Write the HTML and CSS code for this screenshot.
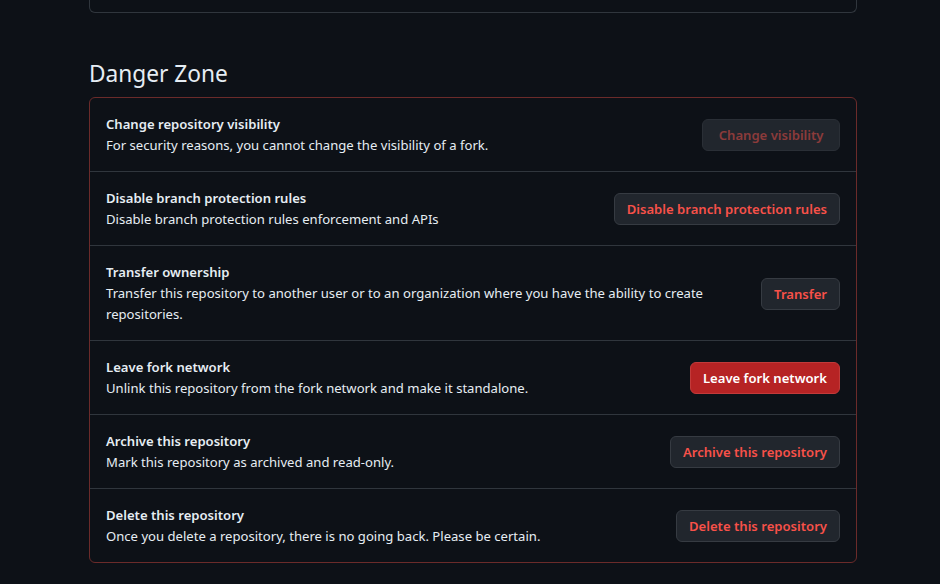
FILE: index.html
```html
<!DOCTYPE html>
<html lang="en">
<head>
<meta charset="utf-8">
<title>Danger Zone</title>
<link rel="stylesheet" href="styles.css">
</head>
<body>
<div class="page">
  <div class="prev-box"></div>
  <h2 class="subhead">Danger Zone</h2>
  <div class="danger-box">
    <div class="row">
      <div class="info">
        <div class="title">Change repository visibility</div>
        <div class="desc">For security reasons, you cannot change the visibility of a fork.</div>
      </div>
      <button class="btn btn-disabled" type="button">Change visibility</button>
    </div>
    <div class="row">
      <div class="info">
        <div class="title">Disable branch protection rules</div>
        <div class="desc">Disable branch protection rules enforcement and APIs</div>
      </div>
      <button class="btn" type="button">Disable branch protection rules</button>
    </div>
    <div class="row">
      <div class="info">
        <div class="title">Transfer ownership</div>
        <div class="desc">Transfer this repository to another user or to an organization where you have the ability to create repositories.</div>
      </div>
      <button class="btn" type="button">Transfer</button>
    </div>
    <div class="row">
      <div class="info">
        <div class="title">Leave fork network</div>
        <div class="desc">Unlink this repository from the fork network and make it standalone.</div>
      </div>
      <button class="btn btn-danger" type="button">Leave fork network</button>
    </div>
    <div class="row">
      <div class="info">
        <div class="title">Archive this repository</div>
        <div class="desc">Mark this repository as archived and read-only.</div>
      </div>
      <button class="btn" type="button">Archive this repository</button>
    </div>
    <div class="row">
      <div class="info">
        <div class="title">Delete this repository</div>
        <div class="desc">Once you delete a repository, there is no going back. Please be certain.</div>
      </div>
      <button class="btn" type="button">Delete this repository</button>
    </div>
  </div>
</div>
</body>
</html>
```
FILE: styles.css
```css
* { box-sizing: border-box; }
html, body {
  margin: 0;
  padding: 0;
  background: #0d1117;
}
body {
  font-family: "Noto Sans", "Open Sans", "Liberation Sans", sans-serif;
  font-size: 13.1px;
  line-height: 21px;
  color: #e6edf3;
}
.page {
  width: 768px;
  margin-left: 89px;
}
.prev-box {
  height: 13px;
  border: 1px solid #30363d;
  border-top: none;
  border-radius: 0 0 6px 6px;
}
.subhead {
  margin: 43px 0 5px;
  font-size: 22.7px;
  font-weight: 400;
  line-height: 36px;
  color: #e6edf3;
}
.danger-box {
  border: 1px solid #6b2b2a;
  border-radius: 6px;
}
.row {
  display: flex;
  align-items: center;
  justify-content: space-between;
  padding: 16px 16px 15px;
  border-top: 1px solid #30363d;
}
.row:first-child { border-top: none; }
.info { flex: 1; min-width: 0; }
.title {
  font-weight: 600;
  color: #e6edf3;
}
.desc { color: #e6edf3; }
.btn {
  flex: none;
  height: 32px;
  padding: 0 12px;
  margin-left: 16px;
  font-family: inherit;
  font-size: 13.1px;
  font-weight: 600;
  line-height: 20px;
  color: #f85149;
  background: #21262d;
  border: 1px solid #363b42;
  border-radius: 6px;
  cursor: pointer;
}
.btn-disabled {
  padding: 0 15.5px;
  color: rgba(248, 81, 73, 0.5);
  border-color: #2a2f36;
  cursor: default;
}
.btn-danger {
  color: #ffffff;
  background: #b62324;
  border-color: #c23a3a;
}
```
